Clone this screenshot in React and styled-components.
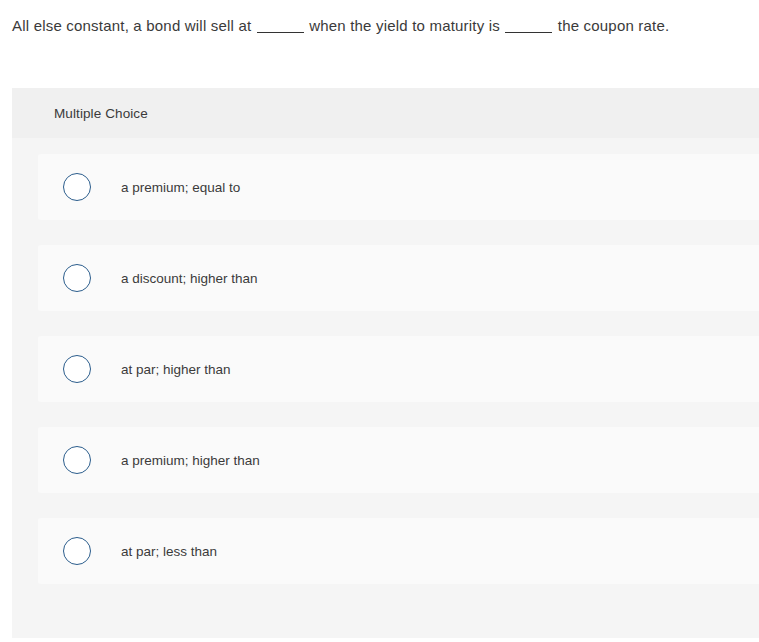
import React from 'react'
import styled, { createGlobalStyle } from 'styled-components'

const GlobalStyle = createGlobalStyle`
  html, body {
    margin: 0;
    padding: 0;
    background: #ffffff;
  }
  body {
    font-family: "Liberation Sans", Arial, sans-serif;
    color: #333333;
  }
`

const choices = [
  'a premium; equal to',
  'a discount; higher than',
  'at par; higher than',
  'a premium; higher than',
  'at par; less than',
]

export default function App() {
  return (
    <>
      <GlobalStyle />
      <Page>
        <Prompt>
          All else constant, a bond will sell at <Blank /> when the yield to
          maturity is <Blank /> the coupon rate.
        </Prompt>

        <Panel>
          <PanelHeader>Multiple Choice</PanelHeader>
          <ChoiceList>
            {choices.map((label, i) => (
              <Choice key={`choice_${i}`}>
                <Radio />
                <ChoiceLabel>{label}</ChoiceLabel>
              </Choice>
            ))}
          </ChoiceList>
        </Panel>
      </Page>
    </>
  )
}

const Page = styled.div`
  display: flex;
  flex-direction: column;
  padding: 16px 0 0 12px;
  width: 759px;
  box-sizing: border-box;
`

const Prompt = styled.div`
  font-size: 15px;
  line-height: 20px;
  letter-spacing: 0.2px;
  color: #3a3a3a;
  white-space: nowrap;
`

const Blank = styled.span`
  display: inline-block;
  width: 47px;
  border-bottom: 1px solid #333333;
  vertical-align: -2px;
  margin: 0 1px;
`

const Panel = styled.div`
  display: flex;
  flex-direction: column;
  margin-top: 52px;
  background: #f5f5f5;
  height: 550px;
`

const PanelHeader = styled.div`
  display: flex;
  align-items: center;
  height: 50px;
  padding-left: 42px;
  background: #f0f0f0;
  font-size: 13.5px;
  letter-spacing: 0.1px;
  color: #3a3a3a;
`

const ChoiceList = styled.div`
  display: flex;
  flex-direction: column;
  gap: 25px;
  padding: 16px 0 0 26px;
`

const Choice = styled.div`
  display: flex;
  align-items: center;
  height: 66px;
  background: #fafafa;
  border-radius: 3px 0 0 3px;
`

const Radio = styled.span`
  box-sizing: border-box;
  width: 28px;
  height: 28px;
  margin-left: 25px;
  border: 1.5px solid #2b5d8c;
  border-radius: 50%;
  background: #ffffff;
  flex: 0 0 auto;
`

const ChoiceLabel = styled.span`
  margin-left: 30px;
  font-size: 13.5px;
  color: #3a3a3a;
`
